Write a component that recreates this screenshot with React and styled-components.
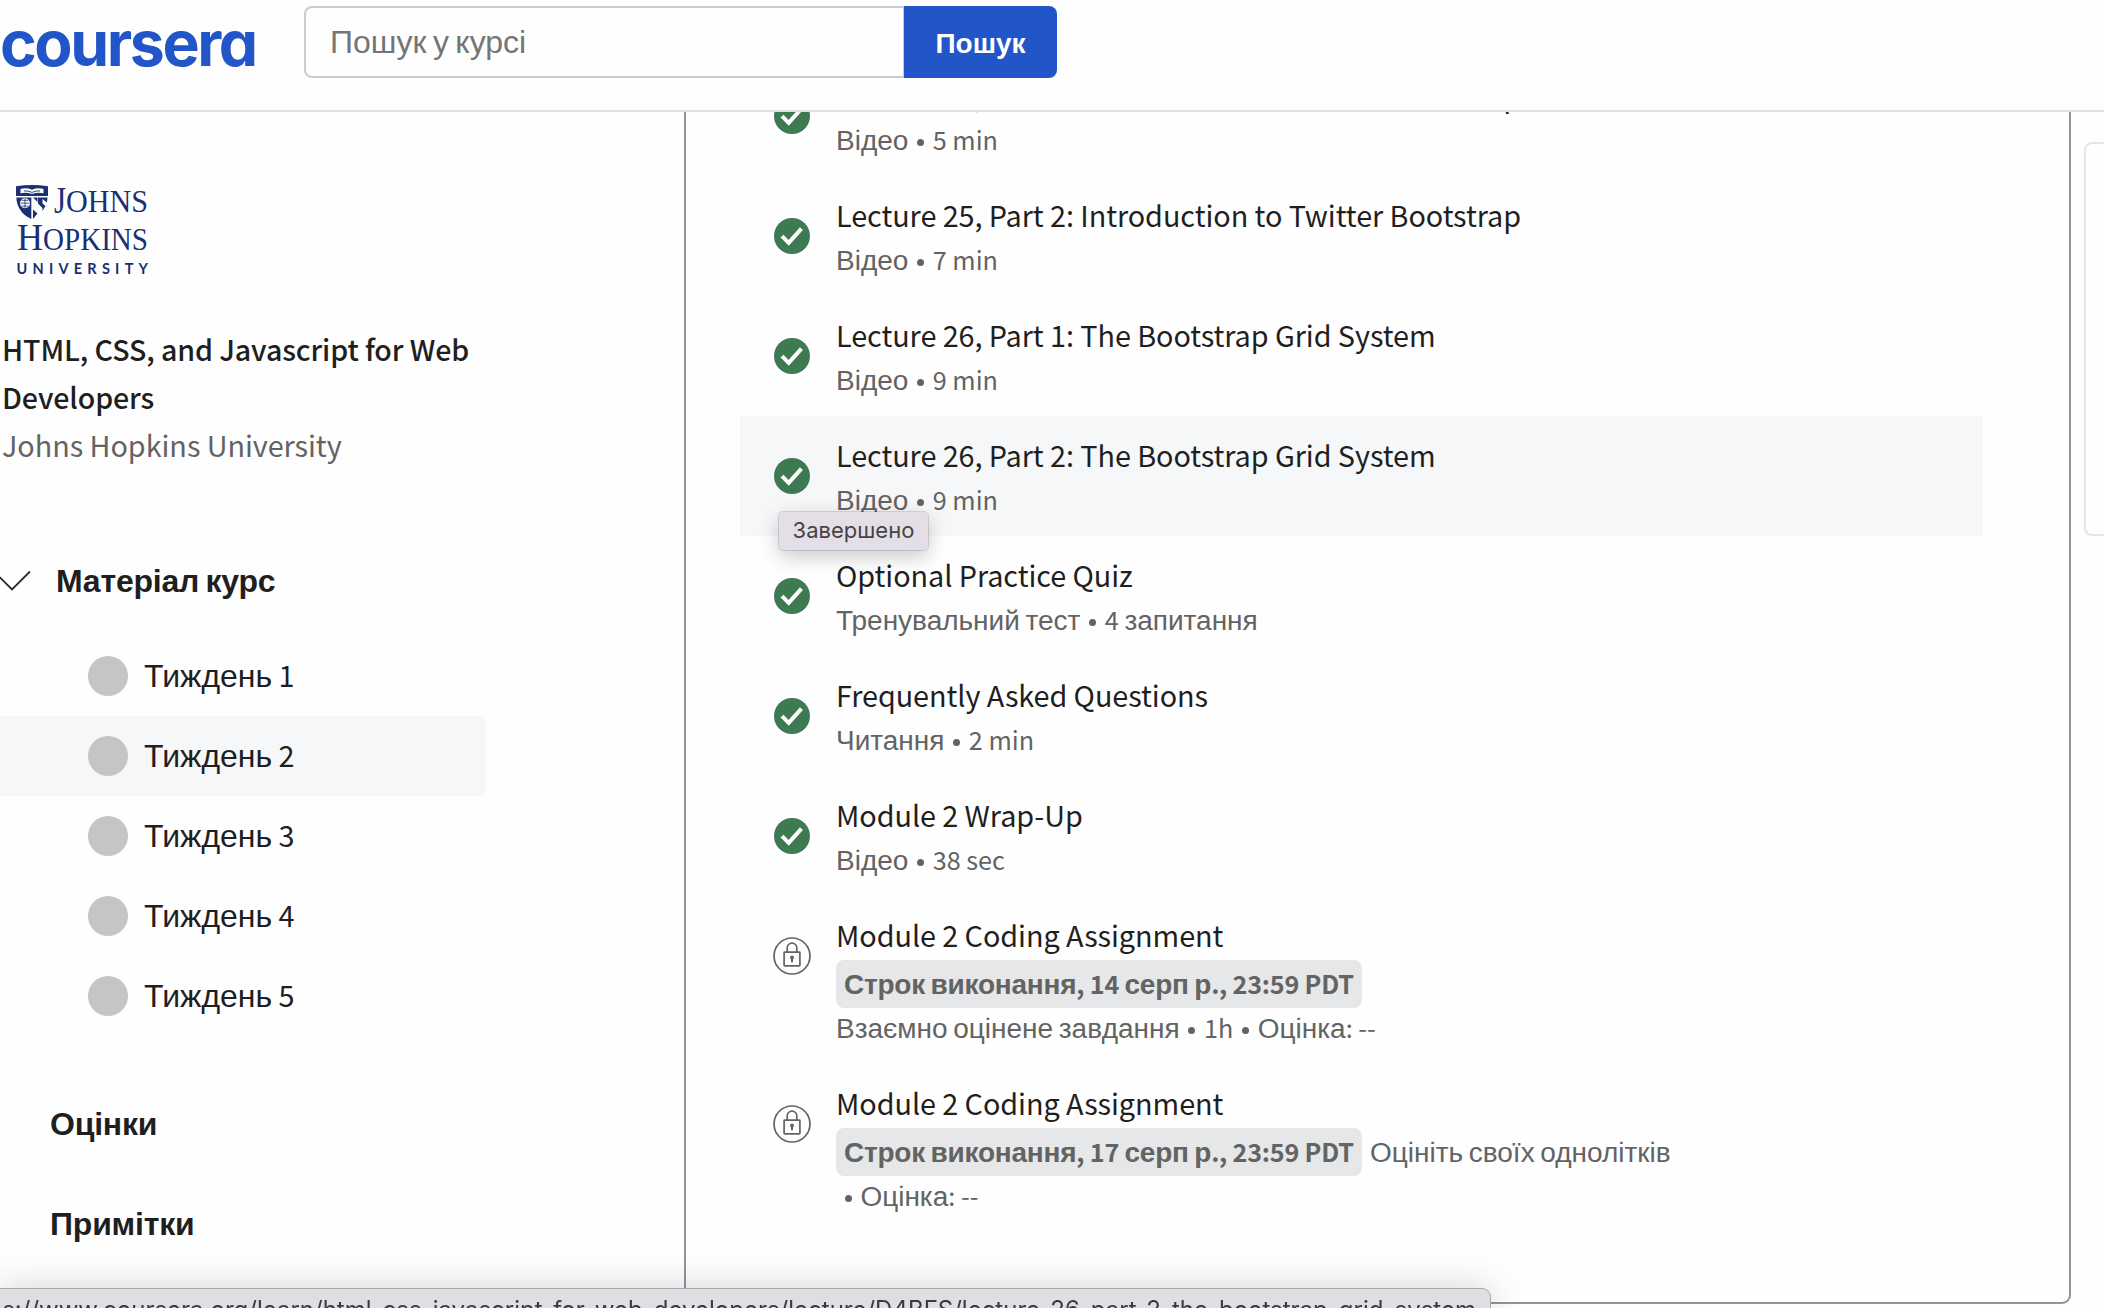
import React from "react";
import styled, { createGlobalStyle, css } from "styled-components";

const GlobalStyle = createGlobalStyle`
  *, *::before, *::after { box-sizing: border-box; }
  html, body, #root { height: 100%; }
  body {
    margin: 0;
    overflow: hidden;
    background: #fefefe;
    color: #1f1f1f;
    font-family: "Noto Sans CJK SC", "Liberation Sans", sans-serif;
  }
  button, input { font: inherit; }
`;

/* Latin text uses the body face; Cyrillic runs switch to a grotesque that sits slightly larger. */
const CyrillicRun = styled.span`
  font-family: "Liberation Sans", Arial, sans-serif;
  font-size: 1.1111em;
  line-height: 0;
`;

const Text = ({ children }) =>
  String(children)
    .split(/([\u0400-\u04FF]+)/)
    .map((part, i) => (i % 2 ? <CyrillicRun key={i}>{part}</CyrillicRun> : part));

const Page = styled.div`
  display: flex;
  flex-direction: column;
  height: 1308px;
  width: 2104px;
  overflow: hidden;
`;

/* ---------- header ---------- */

const Header = styled.header`
  display: flex;
  align-items: flex-start;
  flex: none;
  height: 112px;
  border-bottom: 2px solid #e0e0e0;
  padding-top: 6px;
`;

const Wordmark = styled.div`
  width: 304px;
  height: 72px;
  line-height: 75px;
  font-family: Inter, sans-serif;
  font-size: 62.5px;
  font-weight: 700;
  font-feature-settings: "cv11";
  letter-spacing: -2.4px;
  color: #2256c8;
`;

const SearchForm = styled.form`
  display: flex;
  width: 753px;
  height: 72px;
`;

const SearchField = styled.div`
  flex: 1;
  border: 2px solid #c7cdd2;
  border-right-width: 1px;
  border-radius: 8px 0 0 8px;
  padding-left: 24px;
  font-size: 28.8px;
  line-height: 66px;
  color: #757575;
`;

const SearchButton = styled.button`
  width: 153px;
  padding: 0;
  border: 0;
  border-radius: 0 8px 8px 0;
  background: #2256c8;
  color: #fff;
  font-size: 25.2px;
  font-weight: 700;
  line-height: 70px;
`;

/* ---------- sidebar ---------- */

const Body = styled.div`
  display: flex;
  flex: 1;
  min-height: 0;
`;

const Sidebar = styled.aside`
  width: 684px;
  flex: none;
  padding-top: 67px;
`;

const UniversityLogo = styled.svg`
  display: block;
  width: 150px;
  height: 100px;
  margin-left: 10px;
`;

const CourseInfo = styled.div`
  width: 486px;
  margin-top: 46px;
  padding-left: 2px;
  font-size: 28.8px;
  line-height: 48px;
`;

const CourseTitle = styled.h2`
  margin: 0;
  font-size: 28.6px;
  font-weight: 500;
  letter-spacing: -0.12px;
`;

const CourseOwner = styled.div`
  color: #636363;
  letter-spacing: -0.05px;
`;

const SectionToggle = styled.div`
  display: flex;
  align-items: center;
  height: 80px;
  margin-top: 72px;
  padding-bottom: 4px;
  font-size: 28.8px;
  font-weight: 700;
  letter-spacing: -0.2px;
`;

const Chevron = styled.svg`
  width: 56px;
  height: 40px;
  flex: none;
`;

const WeekList = styled.ul`
  list-style: none;
  margin: 0;
  padding: 15px 0 0;
  width: 486px;
`;

const Week = styled.li`
  display: flex;
  align-items: center;
  gap: 16px;
  height: 80px;
  padding-left: 88px;
  border-radius: 0 8px 8px 0;
  font-size: 28.8px;
  ${(p) => p.$active && css`background: #f5f7f9;`}
`;

const WeekDot = styled.span`
  width: 40px;
  height: 40px;
  border-radius: 50%;
  background: #c4c5c7;
`;

const WeekLabel = styled.span`
  padding-bottom: 4px;
`;

const NavLinks = styled.nav`
  padding: 37px 0 0 50px;
`;

const NavLink = styled.div`
  height: 100px;
  line-height: 100px;
  font-size: 28.8px;
  font-weight: 700;
  letter-spacing: -0.2px;
`;

/* ---------- lesson list ---------- */

const LessonPanel = styled.main`
  width: 1387px;
  height: 1192px;
  flex: none;
  overflow: hidden;
  border: solid #939499;
  border-width: 0 2px 2px;
  border-bottom-right-radius: 9px;
`;

const LessonList = styled.ul`
  list-style: none;
  margin: -56px 86px 0 54px;
  padding: 0;
`;

const Lesson = styled.li`
  position: relative;
  display: flex;
  align-items: flex-start;
  padding: 15px 0 17px;
  ${(p) => p.$active && css`background: #f5f7f9;`}
`;

const IconSlot = styled.div`
  width: 96px;
  flex: none;
  padding: ${(p) => (p.$locked ? "26px 0 0 33px" : "27px 0 0 34px")};
  svg { display: block; }
`;

const LessonTitle = styled.h3`
  margin: 0;
  font-size: 28.8px;
  font-weight: 400;
  line-height: 48px;
  letter-spacing: -0.065px;
  white-space: nowrap;
`;

const Meta = styled.div`
  color: #636363;
  font-size: 25.2px;
  line-height: 40px;
  white-space: pre;
`;

const DueLine = styled(Meta)`
  display: flex;
  gap: 8px;
  height: 48px;
  padding-top: 1px;
  line-height: 46px;
`;

const DueBadge = styled.span`
  width: 526px;
  height: 48px;
  padding: 0 8px;
  border-radius: 8px;
  background: #e5e7e8;
  font-weight: 700;
  letter-spacing: -0.22px;
`;

const Dot = styled.span`
  display: inline-block;
  width: 7px;
  height: 7px;
  margin: 0 8.6px 4.5px 8.8px;
  border-radius: 50%;
  background: currentColor;
`;

const Tooltip = styled.div`
  position: absolute;
  z-index: 2;
  left: 39px;
  top: 96px;
  width: 149px;
  height: 38px;
  border-radius: 4px;
  background: #e4dfe6;
  box-shadow: 0 0 0 1px rgba(0, 0, 0, 0.12), 0 6px 20px rgba(0, 0, 0, 0.22);
  color: #454347;
  font-family: Inter, sans-serif;
  font-size: 22px;
  line-height: 36px;
  text-align: center;
`;

const SideCard = styled.section`
  width: 40px;
  height: 394px;
  margin: 30px -20px 0 13px;
  flex: none;
  border: 2px solid #e5e5e5;
  border-radius: 8px;
`;

const StatusBar = styled.div`
  position: fixed;
  left: 0;
  bottom: 0;
  width: 1491px;
  height: 20px;
  overflow: visible;
  border-top: 1px solid #a9a9ab;
  border-right: 1px solid #a9a9ab;
  border-top-right-radius: 9px;
  background: #dedfe3;
  box-shadow: 0 4px 36px rgba(0, 0, 0, 0.25);
`;

const StatusUrl = styled.div`
  width: 1476px;
  height: 19px;
  overflow: hidden;
  display: flex;
  justify-content: flex-end;
  padding-top: 6px;
  font-family: Inter, sans-serif;
  font-size: 24px;
  line-height: 30px;
  white-space: nowrap;
  color: #3a3b3e;
`;

/* ---------- icons ---------- */

const DoneIcon = () => (
  <svg width="36" height="36" viewBox="0 0 36 36">
    <circle cx="18" cy="18" r="18" fill="#3d7a52" />
    <path d="M8 18.2 14.7 24.8 27.4 10.6" fill="none" stroke="#fff" strokeWidth="4" />
  </svg>
);

const LockIcon = () => (
  <svg width="38" height="38" viewBox="0 0 38 38" fill="none" stroke="#636363" strokeWidth="1.7">
    <circle cx="19" cy="19" r="18" />
    <rect x="11.1" y="15.1" width="15.8" height="13.8" rx="0.6" />
    <path d="M14.2 15V10.9a4.8 4.8 0 0 1 9.6 0V15" />
    <circle cx="19" cy="20.6" r="2" fill="#636363" stroke="none" />
    <path d="M19 21v4.2" strokeWidth="2" />
  </svg>
);

const JohnsHopkinsLogo = () => (
  <UniversityLogo viewBox="10 179 150 100" fill="#1b2f73">
    <path d="M16 186.2Q32 183.6 48 186.2V196H16Z" />
    <path d="M20.5 193.2V189q6-1.6 11.5.8 5.5-2.4 11.5-.8v4.2q-6-1.3-11.5.8-5.5-2.1-11.5-.8Z" fill="#fff" />
    <path d="M24 191q4-.6 8 1.4 4-2 8-1.4" fill="none" stroke="#1b2f73" strokeWidth="0.9" />
    <path d="M16.3 197.500H31.300V219C22 215 16.800 207 16.300 197.500Z" />
    <circle cx="25" cy="203.2" r="5" fill="#fff" />
    <path d="M20.5 203.2h9M25 198.5v9.4M21.6 200.3h6.800M21.6 206.1h6.800" stroke="#1b2f73" strokeWidth="0.8" />
    <path d="M33 209.5 37.5 213.5 33 219ZM33 197.5h4.5v4.500ZM38 197.5h9.5l-.6 5-4.400-3.500v9l-4.500-4.500ZM42.5 203.5l3 2.600-3 4.900Z" />
    <g fontFamily="'Liberation Serif', serif">
      <text x="54" y="212.500" fontSize="38" textLength="12" lengthAdjust="spacingAndGlyphs">J</text>
      <text x="66" y="212" fontSize="32" textLength="82" lengthAdjust="spacingAndGlyphs">OHNS</text>
      <text x="17" y="250" fontSize="38" textLength="26" lengthAdjust="spacingAndGlyphs">H</text>
      <text x="43" y="250" fontSize="32" textLength="105" lengthAdjust="spacingAndGlyphs">OPKINS</text>
    </g>
    <text x="16.5" y="273.6" fontSize="14.5" fontWeight="700" fontFamily="Lato, sans-serif" textLength="131.5">UNIVERSITY</text>
  </UniversityLogo>
);

/* ---------- data ---------- */

const weeks = [1, 2, 3, 4, 5];

const lessons = [
  { title: "Lecture 25, Part 1: Introduction to Twitter Bootstrap", meta: ["Відео", "5 min"] },
  { title: "Lecture 25, Part 2: Introduction to Twitter Bootstrap", meta: ["Відео", "7 min"] },
  { title: "Lecture 26, Part 1: The Bootstrap Grid System", meta: ["Відео", "9 min"] },
  { title: "Lecture 26, Part 2: The Bootstrap Grid System", meta: ["Відео", "9 min"], active: true, tip: "Завершено" },
  { title: "Optional Practice Quiz", meta: ["Тренувальний тест", "4 запитання"] },
  { title: "Frequently Asked Questions", meta: ["Читання", "2 min"] },
  { title: "Module 2 Wrap-Up", meta: ["Відео", "38 sec"] },
  {
    title: "Module 2 Coding Assignment",
    locked: true,
    due: "Строк виконання, 14 серп р., 23:59 PDT",
    meta: ["Взаємно оцінене завдання", "1h", "Оцінка: --"],
  },
  {
    title: "Module 2 Coding Assignment",
    locked: true,
    due: "Строк виконання, 17 серп р., 23:59 PDT",
    note: "Оцініть своїх однолітків",
    meta: ["", "Оцінка: --"],
  },
];

const LessonRow = ({ title, meta, active, tip, locked, due, note }) => (
  <Lesson $active={active}>
    <IconSlot $locked={locked}>{locked ? <LockIcon /> : <DoneIcon />}</IconSlot>
    <div>
      <LessonTitle>{title}</LessonTitle>
      {due && (
        <DueLine>
          <DueBadge><Text>{due}</Text></DueBadge>
          {note && <span><Text>{note}</Text></span>}
        </DueLine>
      )}
      <Meta>
        {meta.map((m, i) => (
          <React.Fragment key={i}>
            {i > 0 && <Dot />}
            <Text>{m}</Text>
          </React.Fragment>
        ))}
      </Meta>
    </div>
    {tip && <Tooltip role="tooltip">{tip}</Tooltip>}
  </Lesson>
);

export default function App() {
  return (
    <Page>
      <GlobalStyle />
      <Header>
        <Wordmark>coursera</Wordmark>
        <SearchForm>
          <SearchField><Text>Пошук у курсі</Text></SearchField>
          <SearchButton type="button"><Text>Пошук</Text></SearchButton>
        </SearchForm>
      </Header>
      <Body>
        <Sidebar>
          <JohnsHopkinsLogo />
          <CourseInfo>
            <CourseTitle>HTML, CSS, and Javascript for Web Developers</CourseTitle>
            <CourseOwner>Johns Hopkins University</CourseOwner>
          </CourseInfo>
          <SectionToggle>
            <Chevron viewBox="0 0 56 40" fill="none" stroke="#2b2b2b" strokeWidth="1.8">
              <path d="M-6 12.5 12 30.5 30 12.5" />
            </Chevron>
            <span><Text>Матеріал курс</Text></span>
          </SectionToggle>
          <WeekList>
            {weeks.map((n) => (
              <Week key={n} $active={n === 2}>
                <WeekDot />
                <WeekLabel><Text>{`Тиждень ${n}`}</Text></WeekLabel>
              </Week>
            ))}
          </WeekList>
          <NavLinks>
            <NavLink><Text>Оцінки</Text></NavLink>
            <NavLink><Text>Примітки</Text></NavLink>
          </NavLinks>
        </Sidebar>
        <LessonPanel>
          <LessonList>
            {lessons.map((lesson, i) => (
              <LessonRow key={i} {...lesson} />
            ))}
          </LessonList>
        </LessonPanel>
        <SideCard />
      </Body>
      <StatusBar>
        <StatusUrl>
          https://www.coursera.org/learn/html-css-javascript-for-web-developers/lecture/D4BFS/lecture-26-part-2-the-bootstrap-grid-system
        </StatusUrl>
      </StatusBar>
    </Page>
  );
}
